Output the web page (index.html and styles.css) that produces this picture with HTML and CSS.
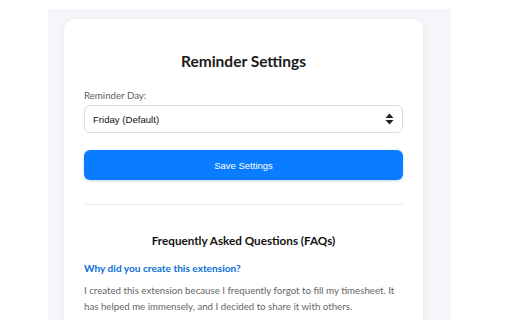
FILE: index.html
```html
<!DOCTYPE html>
<html lang="en">
<head>
<meta charset="utf-8">
<title>Reminder Settings</title>
<link rel="stylesheet" href="styles.css">
</head>
<body>
<div class="panel">
  <div class="card">
    <h1 class="title">Reminder Settings</h1>
    <label class="label" for="day">Reminder Day:</label>
    <div class="select">
      <span class="select-value">Friday (Default)</span>
      <svg class="select-arrows" width="9" height="12" viewBox="0 0 9 12"><path d="M4.5 0.5 L8.5 5 L0.5 5 Z M0.5 7 L8.5 7 L4.5 11.5 Z" fill="#222"/></svg>
    </div>
    <button class="btn">Save Settings</button>
    <hr class="sep">
    <h2 class="faq-title">Frequently Asked Questions (FAQs)</h2>
    <h3 class="faq-q">Why did you create this extension?</h3>
    <p class="faq-a">I created this extension because I frequently forgot to fill my timesheet. It has helped me immensely, and I decided to share it with others.</p>
  </div>
</div>
</body>
</html>
```
FILE: styles.css
```css
html, body {
  margin: 0;
  padding: 0;
  background: #ffffff;
  height: 100%;
  overflow: hidden;
}
body {
  font-family: "Lato", "Open Sans", sans-serif;
}
.panel {
  margin: 9px 0 0 48px;
  width: 359px;
  min-height: 320px;
  padding: 10px 28px 0 16px;
  background: #f4f6f9;
}
.card {
  background: #ffffff;
  border-radius: 10px;
  padding: 20px 20px 40px 20px;
  box-shadow: 0 1px 6px rgba(0, 0, 0, 0.06);
}
.title {
  margin: 11px 0 16px 0;
  font-size: 15.5px;
  line-height: 22px;
  font-weight: 700;
  text-align: center;
  color: #1a1a1a;
}
.label {
  display: block;
  font-size: 9.7px;
  line-height: 14px;
  color: #5e5e5e;
  margin-bottom: 3px;
}
.select {
  display: flex;
  align-items: center;
  justify-content: space-between;
  height: 26px;
  padding: 0 8px 0 8px;
  border: 1px solid #dcdcdc;
  border-radius: 6px;
  background: #fff;
}
.select-value {
  font-family: "Liberation Sans", Arial, sans-serif;
  font-size: 9.6px;
  color: #111;
}
.select-arrows {
  display: block;
}
.btn {
  display: block;
  width: 100%;
  height: 30px;
  margin-top: 17px;
  border: none;
  border-radius: 6px;
  background: #0a7cff;
  color: #fff;
  font-family: "Liberation Sans", Arial, sans-serif;
  font-size: 9.5px;
  box-shadow: 0 1px 3px rgba(0, 90, 200, 0.25);
}
.sep {
  margin: 24px 0 0 0;
  border: none;
  border-top: 1px solid #ececec;
}
.faq-title {
  margin: 27px 0 0 0;
  font-size: 11.7px;
  line-height: 16px;
  font-weight: 700;
  text-align: center;
  color: #111;
}
.faq-q {
  margin: 13px 0 0 0;
  font-size: 10.1px;
  line-height: 14px;
  font-weight: 700;
  color: #0a6fd6;
}
.faq-a {
  margin: 7px 0 0 0;
  font-size: 9.7px;
  line-height: 16px;
  color: #666;
}
```
